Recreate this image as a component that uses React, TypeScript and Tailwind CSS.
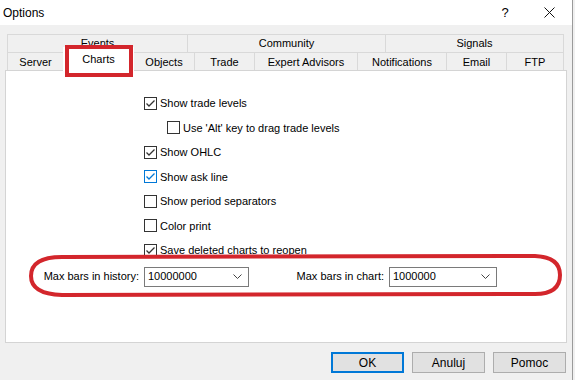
import React from 'react';

const font = { fontFamily: '"Liberation Sans", Arial, sans-serif' };

type Opt = { label: string; checked: boolean; indent?: boolean; focus?: boolean };

const options: Opt[] = [
  { label: 'Show trade levels', checked: true },
  { label: "Use 'Alt' key to drag trade levels", checked: false, indent: true },
  { label: 'Show OHLC', checked: true },
  { label: 'Show ask line', checked: true, focus: true },
  { label: 'Show period separators', checked: false },
  { label: 'Color print', checked: false },
  { label: 'Save deleted charts to reopen', checked: true },
];

function CheckBox({ checked, focus }: { checked: boolean; focus?: boolean }) {
  const color = focus ? '#0078d7' : '#333333';
  return (
    <span
      className={`flex h-[13px] w-[13px] shrink-0 items-center justify-center border bg-white ${
        focus ? 'border-[#0078d7]' : 'border-[#333333]'
      }`}
    >
      {checked && (
        <svg width="11" height="11" viewBox="0 0 11 11">
          <path d="M1.5 5.5 L4 8 L9.5 2.5" fill="none" stroke={color} strokeWidth="1.3" />
        </svg>
      )}
    </span>
  );
}

function Combo({ value, width }: { value: string; width: string }) {
  return (
    <div className={`flex h-[20px] items-center justify-between border border-[#7a7a7a] bg-white pl-[3px] pr-[6px] ${width}`}>
      <span>{value}</span>
      <svg width="9" height="5" viewBox="0 0 9 5">
        <path d="M0.5 0.5 L4.5 4.5 L8.5 0.5" fill="none" stroke="#444" strokeWidth="1" />
      </svg>
    </div>
  );
}

const topTabs = [
  { label: 'Events', w: 'w-[180px]' },
  { label: 'Community', w: 'w-[198px]' },
  { label: 'Signals', w: 'w-[179px]' },
];

const bottomTabs = [
  { label: 'Server', w: 'w-[56px]' },
  { label: 'Charts', w: 'w-[70px]', active: true },
  { label: 'Objects', w: 'w-[61px]' },
  { label: 'Trade', w: 'w-[60px]' },
  { label: 'Expert Advisors', w: 'w-[103px]' },
  { label: 'Notifications', w: 'w-[89px]' },
  { label: 'Email', w: 'w-[60px]' },
  { label: 'FTP', w: 'w-[58px]' },
];

export default function App() {
  return (
    <div className="relative h-[380px] w-[575px] overflow-hidden bg-[#f0f0f0] text-[11px] text-black" style={font}>
      <div className="h-full w-[573px] border-r border-[#9a9a9a]">
        {/* title bar */}
        <div className="flex h-[25px] items-center justify-between bg-white pl-[3px] text-[12px]">
          <span>Options</span>
          <div className="flex items-center">
            <span className="mr-[11px] w-[20px] text-center text-[13px]">?</span>
            <span className="flex w-[46px] justify-center">
              <svg width="11" height="11" viewBox="0 0 11 11">
                <path d="M0.5 0.5 L10.5 10.5 M10.5 0.5 L0.5 10.5" stroke="#111" strokeWidth="1" />
              </svg>
            </span>
          </div>
        </div>

        {/* tabs */}
        <div className="pl-[7px] pt-[9px]">
          <div className="flex h-[18px]">
            {topTabs.map((t, i) => (
              <div
                key={t.label}
                className={`flex items-center justify-center border-l border-t border-[#d9d9d9] ${t.w} ${
                  i === topTabs.length - 1 ? 'border-r' : ''
                }`}
              >
                {t.label}
              </div>
            ))}
          </div>
          <div className="flex h-[18px]">
            {bottomTabs.map((t, i) => (
              <div
                key={t.label}
                className={`relative flex items-center justify-center border-l border-t border-[#d9d9d9] pt-[1px] ${t.w} ${
                  i === bottomTabs.length - 1 ? 'border-r' : ''
                }`}
              >
                {t.active ? (
                  <div className="absolute -bottom-[3px] -left-[1px] -right-[1px] -top-[6px] z-10 flex items-center justify-center bg-white pb-[2px]">
                    {t.label}
                  </div>
                ) : (
                  t.label
                )}
              </div>
            ))}
          </div>
        </div>

        {/* panel */}
        <div className="ml-[5px] h-[273px] w-[562px] border border-[#d4d4d4] bg-white">
          <div className="flex flex-col pl-[138px] pt-[20px]">
            {options.map((o) => (
              <div key={o.label} className={`flex h-[24.5px] items-center gap-[3px] ${o.indent ? 'pl-[23px]' : ''}`}>
                <CheckBox checked={o.checked} focus={o.focus} />
                <span>{o.label}</span>
              </div>
            ))}
          </div>
          <div className="mt-[4px] flex items-center">
            <span className="w-[133px] text-right">Max bars in history:</span>
            <div className="ml-[5px]">
              <Combo value="10000000" width="w-[105px]" />
            </div>
            <span className="w-[135px] text-right">Max bars in chart:</span>
            <div className="ml-[5px]">
              <Combo value="1000000" width="w-[108px]" />
            </div>
          </div>
        </div>

        {/* buttons */}
        <div className="mt-[9px] flex justify-end gap-[8px] pr-[6px] text-[12px]">
          <button className="h-[21px] w-[73px] border-2 border-[#0078d7] bg-[#e1e1e1]">OK</button>
          <button className="h-[21px] w-[73px] border border-[#adadad] bg-[#e1e1e1]">Anuluj</button>
          <button className="h-[21px] w-[73px] border border-[#adadad] bg-[#e1e1e1]">Pomoc</button>
        </div>
      </div>

      {/* red annotations */}
      <svg className="pointer-events-none absolute left-0 top-0 z-20" width="575" height="380" viewBox="0 0 575 380">
        <rect x="67" y="47" width="64" height="28" fill="none" stroke="#d3262c" strokeWidth="4" />
        <path
          d="M62 257 L535 256 Q560 257 560 275 Q560 294 535 294 L62 295 Q31 294 31 276 Q31 257 62 257 Z"
          fill="none"
          stroke="#d3262c"
          strokeWidth="4"
        />
      </svg>
    </div>
  );
}
